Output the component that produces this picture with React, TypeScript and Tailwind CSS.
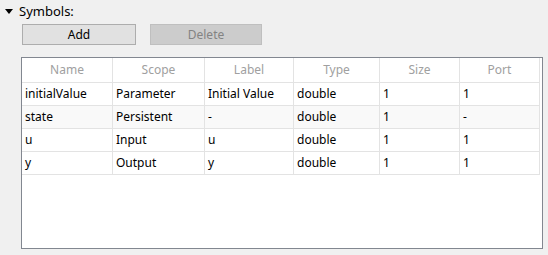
import React from 'react';

const columns = ['Name', 'Scope', 'Label', 'Type', 'Size', 'Port'];

const rows: string[][] = [
  ['initialValue', 'Parameter', 'Initial Value', 'double', '1', '1'],
  ['state', 'Persistent', '-', 'double', '1', '-'],
  ['u', 'Input', 'u', 'double', '1', '1'],
  ['y', 'Output', 'y', 'double', '1', '1'],
];

export default function App() {
  return (
    <div className="w-[548px] h-[255px] bg-[#f0f0f0] text-[12px] text-black font-['Noto_Sans',sans-serif] overflow-hidden">
      {/* section header */}
      <div className="flex items-center h-[22px] pl-[5px]">
        <svg width="8" height="5" viewBox="0 0 8 5" className="mt-[1px]">
          <polygon points="0,0 8,0 4,5" fill="#000" />
        </svg>
        <span className="ml-[6px] text-[13px] leading-none">Symbols:</span>
      </div>

      {/* buttons */}
      <div className="flex gap-[14px] pl-[22px] mt-[2px]">
        <button className="w-[114px] h-[21px] bg-[#e1e1e1] border border-[#adadad] leading-none">
          Add
        </button>
        <button
          disabled
          className="w-[112px] h-[21px] bg-[#cccccc] border border-[#bfbfbf] text-[#838383] leading-none"
        >
          Delete
        </button>
      </div>

      {/* table */}
      <div className="ml-[21px] mt-[12px] w-[522px] h-[192px] bg-white border border-[#828790]">
        <div className="grid grid-cols-[91px_92px_89px_86px_80px_80px]">
          {columns.map((c) => (
            <div
              key={c}
              className="h-[25px] flex items-center justify-center border-r border-b border-[#e3e3e3] text-[#a0a0a0]"
            >
              {c}
            </div>
          ))}
          {rows.map((r, i) =>
            r.map((v, j) => (
              <div
                key={`${i}-${j}`}
                className={`h-[23px] flex items-center pl-[3px] border-r border-b border-[#e3e3e3] ${
                  i === 1 ? 'bg-[#f9f9f9]' : 'bg-white'
                }`}
              >
                {v}
              </div>
            ))
          )}
        </div>
      </div>
    </div>
  );
}
